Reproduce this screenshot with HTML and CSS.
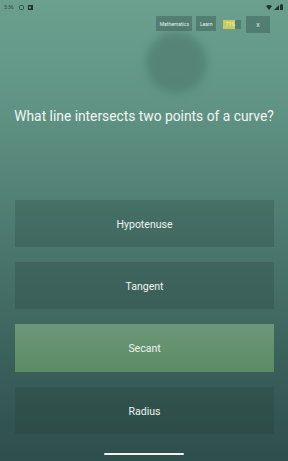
FILE: index.html
```html
<!DOCTYPE html>
<html>
<head>
<meta charset="utf-8">
<link rel="stylesheet" href="styles.css">
</head>
<body>
<div class="screen">
  <div class="status">
    <div class="status-left">
      <span class="time">5:36</span>
      <svg class="sicon" width="5" height="5" viewBox="0 0 5 5"><rect x="0.5" y="0.5" width="4" height="4" rx="1" fill="none" stroke="#2f4a44" stroke-width="0.9"/></svg>
      <svg class="sicon" width="5" height="5" viewBox="0 0 5 5"><rect x="0" y="0" width="5" height="5" fill="#1f3530"/><rect x="1" y="1.5" width="2" height="2" fill="#6a9e8e"/></svg>
    </div>
    <div class="status-right">
      <svg width="6" height="5" viewBox="0 0 6 5"><path d="M0 1 Q3 -0.8 6 1 L3 5 Z" fill="#1f3530"/></svg>
      <svg width="5" height="5" viewBox="0 0 5 5"><path d="M0 5 L5 0 L5 5 Z" fill="#1f3530"/></svg>
      <svg width="3" height="6" viewBox="0 0 3 6"><rect x="0" y="0.8" width="3" height="5.2" fill="#1f3530"/><rect x="0.8" y="0" width="1.4" height="1" fill="#1f3530"/></svg>
    </div>
  </div>
  <div class="header">
    <div class="chip">Mathematics</div>
    <div class="chip learn">Learn</div>
    <div class="progress"><div class="fill" style="width:67%"></div><span class="pct">71%</span></div>
    <div class="close">X</div>
  </div>
  <div class="blob"></div>
  <h1 class="question">What line intersects two points of a curve?</h1>
  <div class="answers">
    <div class="answer">Hypotenuse</div>
    <div class="answer">Tangent</div>
    <div class="answer correct">Secant</div>
    <div class="answer">Radius</div>
  </div>
  <div class="home"></div>
</div>
</body>
</html>
```
FILE: styles.css
```css
* { box-sizing: border-box; }
html, body { margin: 0; padding: 0; }
body {
  width: 288px;
  height: 461px;
  overflow: hidden;
  font-family: Roboto, "Liberation Sans", sans-serif;
}
.screen {
  position: relative;
  width: 288px;
  height: 461px;
  background: linear-gradient(180deg, #6ba08f 0%, #5f9282 25%, #4d7a70 50%, #3d635d 75%, #2e4e4b 100%);
  display: flex;
  flex-direction: column;
}
.status {
  height: 12px;
  display: flex;
  justify-content: space-between;
  align-items: center;
  padding: 2px 5px 0 4px;
}
.status-left, .status-right {
  display: flex;
  align-items: center;
  gap: 4px;
}
.status-right { gap: 1.5px; }
.time {
  font-size: 5px;
  color: #2f4a44;
  margin-right: 1px;
}
.header {
  margin-top: 4px;
  height: 17px;
  display: flex;
  justify-content: flex-end;
  align-items: flex-start;
  padding-right: 18px;
  position: relative;
  z-index: 1;
}
.chip {
  height: 15px;
  padding: 0 3.5px;
  background: rgba(40, 70, 62, 0.35);
  color: #e8f0ec;
  font-size: 5px;
  display: flex;
  align-items: center;
  justify-content: center;
}
.chip + .chip { margin-left: 4px; }
.progress {
  position: relative;
  width: 18px;
  height: 9px;
  margin: 4px 0 0 7px;
  background: rgba(40, 70, 62, 0.35);
}
.fill {
  height: 100%;
  background: #c9cd55;
}
.pct {
  position: absolute;
  left: 3px;
  top: 0;
  height: 9px;
  line-height: 9px;
  font-size: 4.8px;
  color: #f0f4e0;
}
.close {
  width: 24px;
  height: 17px;
  margin-left: 5px;
  background: rgba(40, 70, 62, 0.35);
  color: #e8f0ec;
  font-size: 5.5px;
  display: flex;
  align-items: center;
  justify-content: center;
}
.blob {
  position: absolute;
  left: 146px;
  top: 32px;
  width: 61px;
  height: 61px;
  border-radius: 50%;
  background: #4f7f72;
  filter: blur(4px);
  opacity: 0.75;
}
.question {
  position: relative;
  margin: 74px 0 0 0;
  font-size: 13.8px;
  line-height: 18px;
  font-weight: 400;
  text-align: center;
  color: #f2f6f4;
}
.answers {
  margin: 75px 14px 0 15px;
  display: flex;
  flex-direction: column;
  gap: 15px;
}
.answer {
  height: 47px;
  display: flex;
  align-items: center;
  justify-content: center;
  padding-top: 1px;
  background: rgba(30, 55, 50, 0.22);
  color: #eef3f1;
  font-size: 10.5px;
}
.answer.correct {
  height: 48px;
  background: linear-gradient(180deg, #6d977a 0%, #5b8b63 100%);
}
.home {
  position: absolute;
  left: 104px;
  top: 453px;
  width: 80px;
  height: 2px;
  border-radius: 1px;
  background: #eef3f1;
}
```
